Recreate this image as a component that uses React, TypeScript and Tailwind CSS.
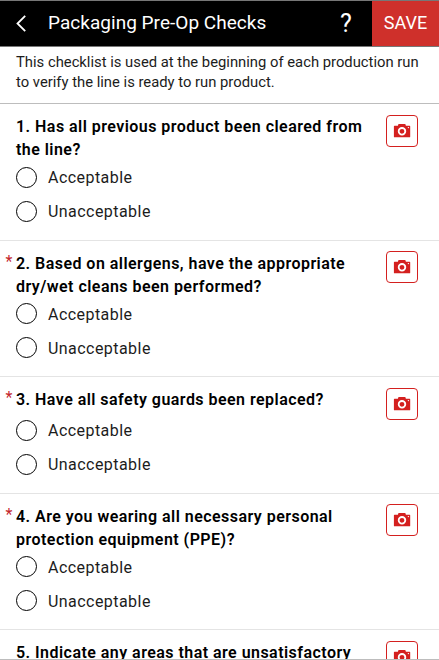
import { useState } from 'react'

type Question = {
  id: number
  text: string
  required?: boolean
}

const OPTIONS = ['Acceptable', 'Unacceptable']

const QUESTIONS: Question[] = [
  { id: 1, text: 'Has all previous product been cleared from the line?' },
  { id: 2, text: 'Based on allergens, have the appropriate dry/wet cleans been performed?', required: true },
  { id: 3, text: 'Have all safety guards been replaced?', required: true },
  { id: 4, text: 'Are you wearing all necessary personal protection equipment (PPE)?', required: true },
  { id: 5, text: 'Indicate any areas that are unsatisfactory' },
]

function BackIcon() {
  return (
    <svg className="w-[10px] h-[17px]" viewBox="0 0 10 17" fill="none" stroke="white" strokeWidth="1.8">
      <path d="M9.2 0.8 1.5 8.5 9.2 16.2" />
    </svg>
  )
}

function CameraIcon() {
  return (
    <svg className="w-[18px] h-[16px]" viewBox="0 0 18 16">
      <path fill="#d4201f" d="M1.5 2.7H4.9L5.5 1H12.3L12.9 2.7H16.6Q17.2 2.7 17.2 3.3V13.7Q17.2 14.3 16.6 14.3H1.5Q0.9 14.3 0.9 13.7V3.3Q0.9 2.7 1.5 2.7Z" />
      <circle cx="9" cy="8.3" r="3.3" fill="none" stroke="white" strokeWidth="1.8" />
      <circle cx="15.4" cy="4.6" r="0.7" fill="white" />
    </svg>
  )
}

function QuestionRow({ question }: { question: Question }) {
  const [answer, setAnswer] = useState<string | null>(null)

  return (
    <section className="flex shrink-0 items-start border-b border-[#e4e4e4] pt-[11px] pb-[11.6px]">
      <div className="w-4 shrink-0 pl-[5.5px] text-[16px] leading-[20px] text-[#c4262e]">{question.required && '*'}</div>
      <div className="min-w-0 flex-1">
        <h2 className="-mb-px min-h-[26px] text-[16px] leading-[23px] font-semibold tracking-[0.46px]">
          {`${question.id}. ${question.text}`}
        </h2>
        {OPTIONS.map(option => (
          <button key={option} onClick={() => setAnswer(option)} className="flex h-[34px] items-center gap-[11px]">
            <span className="flex size-[21px] items-center justify-center rounded-full border border-black">
              {answer === option && <span className="size-3 rounded-full bg-black" />}
            </span>
            <span className="pt-0.5 text-[16px] tracking-[0.45px] text-[#1c1c1c]">{option}</span>
          </button>
        ))}
      </div>
      <button className="-mt-[0.4px] mr-[21px] ml-4 flex size-8 shrink-0 items-center justify-center rounded border border-[#d4201f]" aria-label="Add photo">
        <CameraIcon />
      </button>
    </section>
  )
}

export default function App() {
  return (
    <div className="flex h-[660px] w-[439px] flex-col overflow-hidden bg-white font-[Roboto,sans-serif] text-black">
      <header className="flex h-[47px] shrink-0 items-center border-y border-[#777] bg-black text-white">
        <button className="ml-4 w-8" aria-label="Back"><BackIcon /></button>
        <h1 className="flex-1 text-[19px] tracking-[0.03px]">Packaging Pre-Op Checks</h1>
        <button className="w-[52px] text-[25px]">?</button>
        <button className="h-full w-[67px] bg-[#cf302b] pb-0.5 text-[18px]">SAVE</button>
      </header>
      <p className="h-[57px] shrink-0 border-b border-[#bdbdbd] px-4 pt-[5px] text-[14.8px] leading-[20.4px] text-[#1c1c1c]">
        This checklist is used at the beginning of each production run to verify the line is ready to run product.
      </p>
      <main className="flex min-h-0 flex-1 flex-col overflow-hidden border-b border-[#bdbdbd]">
        {QUESTIONS.map(q => <QuestionRow key={q.id} question={q} />)}
      </main>
    </div>
  )
}
